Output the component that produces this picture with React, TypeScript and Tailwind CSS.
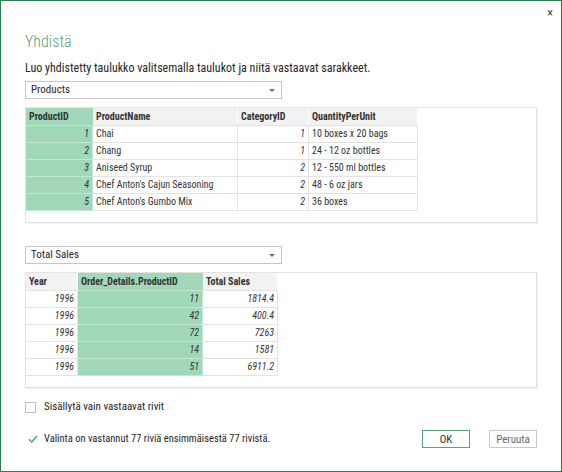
import React from "react";

type Col = { key: string; label: string; width: number; num?: boolean; selected?: boolean };

const productCols: Col[] = [
  { key: "id", label: "ProductID", width: 67, num: true, selected: true },
  { key: "name", label: "ProductName", width: 145 },
  { key: "cat", label: "CategoryID", width: 71, num: true },
  { key: "qty", label: "QuantityPerUnit", width: 109 },
];

const productRows: Record<string, string>[] = [
  { id: "1", name: "Chai", cat: "1", qty: "10 boxes x 20 bags" },
  { id: "2", name: "Chang", cat: "1", qty: "24 - 12 oz bottles" },
  { id: "3", name: "Aniseed Syrup", cat: "2", qty: "12 - 550 ml bottles" },
  { id: "4", name: "Chef Anton's Cajun Seasoning", cat: "2", qty: "48 - 6 oz jars" },
  { id: "5", name: "Chef Anton's Gumbo Mix", cat: "2", qty: "36 boxes" },
];

const salesCols: Col[] = [
  { key: "year", label: "Year", width: 52, num: true },
  { key: "pid", label: "Order_Details.ProductID", width: 125, num: true, selected: true },
  { key: "total", label: "Total Sales", width: 75, num: true },
];

const salesRows: Record<string, string>[] = [
  { year: "1996", pid: "11", total: "1814.4" },
  { year: "1996", pid: "42", total: "400.4" },
  { year: "1996", pid: "72", total: "7263" },
  { year: "1996", pid: "14", total: "1581" },
  { year: "1996", pid: "51", total: "6911.2" },
];

function Dropdown({ value }: { value: string }) {
  return (
    <div className="w-[257px] h-[18px] border border-[#c6c6c6] bg-white flex items-center justify-between pl-[5px] pr-[6px] text-[11px] text-[#262626]">
      <span>{value}</span>
      <span className="w-0 h-0 border-l-[3px] border-r-[3px] border-t-[3px] border-l-transparent border-r-transparent border-t-[#6d6d6d]" />
    </div>
  );
}

function Preview({ cols, rows }: { cols: Col[]; rows: Record<string, string>[] }) {
  return (
    <div className="h-[116px] border border-[#e2e2e2] shadow-[1px_1px_1px_rgba(0,0,0,0.05)] bg-white text-[10px] text-[#333]">
      <div className="flex">
        {cols.map((c) => (
          <div
            key={c.key}
            style={{ width: c.width }}
            className={`h-[17px] px-[3px] leading-[17px] font-bold whitespace-nowrap overflow-hidden border-r ${
              c.selected ? "bg-[#a2d8ba] border-[#a2d8ba]" : "bg-[#f2f2f2] border-white"
            }`}
          >
            {c.label}
          </div>
        ))}
      </div>
      {rows.map((r, i) => (
        <div key={i} className="flex">
          {cols.map((c) => (
            <div
              key={c.key}
              style={{ width: c.width }}
              className={`h-[17px] px-[3px] leading-[16px] whitespace-nowrap overflow-hidden border-t border-r ${
                c.selected ? "bg-[#a2d8ba] border-[#c4e7d3]" : "bg-white border-[#e3e3e3]"
              } ${c.num ? "text-right italic" : ""}`}
            >
              {r[c.key]}
            </div>
          ))}
        </div>
      ))}
      <div className="flex">
        {cols.map((c) => (
          <div key={c.key} style={{ width: c.width }} className={`border-t ${c.selected ? "border-[#c4e7d3]" : "border-[#e3e3e3]"}`} />
        ))}
      </div>
    </div>
  );
}

export default function App() {
  return (
    <div className="relative w-[562px] h-[472px] bg-white border border-[#2f7d51] px-6 flex flex-col font-['Roboto','Noto_Sans',sans-serif] font-stretch-[80%] text-[#262626]">
      <button className="absolute top-[2px] right-[4px] text-[12px] leading-none text-[#444] p-1">×</button>

      <h1 className="mt-[31px] text-[16px] leading-[20px] font-light text-[#5b9d76]">Yhdistä</h1>
      <p className="mt-[8px] text-[12px] leading-[16px]">
        Luo yhdistetty taulukko valitsemalla taulukot ja niitä vastaavat sarakkeet.
      </p>

      <div className="mt-[5px]">
        <Dropdown value="Products" />
      </div>
      <div className="mt-[8px]">
        <Preview cols={productCols} rows={productRows} />
      </div>

      <div className="mt-[23px]">
        <Dropdown value="Total Sales" />
      </div>
      <div className="mt-[8px]">
        <Preview cols={salesCols} rows={salesRows} />
      </div>

      <label className="mt-[12px] flex items-center gap-[8px] text-[11px] leading-[14px]">
        <span className="w-[11px] h-[11px] border border-[#bdbdbd] bg-white" />
        <span>Sisällytä vain vastaavat rivit</span>
      </label>

      <div className="mt-[16px] flex items-center">
        <svg width="10" height="8" viewBox="0 0 10 8" className="ml-[3px]">
          <path d="M1 4.2 L3.8 7 L9 1" fill="none" stroke="#4aa872" strokeWidth="1.4" />
        </svg>
        <span className="ml-[6px] text-[10.5px] leading-[14px]">Valinta on vastannut 77 riviä ensimmäisestä 77 rivistä.</span>
        <div className="ml-auto flex gap-[19px]">
          <button className="w-[48px] h-[18px] border border-[#5e9e78] text-[11px] leading-none text-[#333] bg-white">OK</button>
          <button className="w-[48px] h-[18px] border border-[#c9c9c9] text-[11px] leading-none text-[#666] bg-white">Peruuta</button>
        </div>
      </div>
    </div>
  );
}
